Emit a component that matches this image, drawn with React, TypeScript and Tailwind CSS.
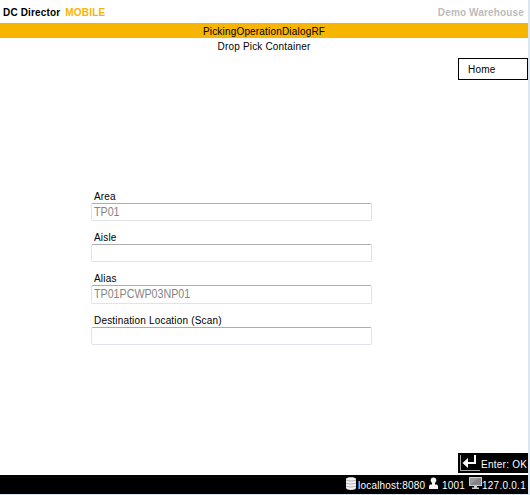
type FieldProps = { label: string; value?: string; box: string };

function Field({ label, value, box }: FieldProps) {
  return (
    <label className="block">
      <span className="block h-[13px] pl-[3px] leading-[14px] whitespace-nowrap">{label}</span>
      <span className={`block w-[281px] rounded-[2px] border border-[#e2e3ea] border-t-[#abadb3] pl-[2px] text-[12.5px] leading-[17px] tracking-normal text-[#858585] ${box}`}>
        <span className="inline-block origin-left scale-x-[0.855] whitespace-nowrap">{value}</span>
      </span>
    </label>
  );
}

function ReturnKey() {
  return (
    <svg width="20" height="16" viewBox="0 0 20 16" fill="none" shapeRendering="crispEdges">
      <path d="M.5 0V15.5H19.5" stroke="#a8a8a8" />
      <path d="M15 0V8H7" stroke="#fff" strokeWidth="2" />
      <path d="M8 3V13L2.5 8Z" fill="#fff" shapeRendering="auto" />
    </svg>
  );
}

function Database() {
  return (
    <svg width="10" height="13" viewBox="0 0 10 13">
      <path d="M0 2C0-.2 10-.2 10 2V11C10 13.5 0 13.5 0 11Z" fill="#f2f2f2" />
      <path d="M0 3.2Q5 5 10 3.2M0 6.2Q5 8 10 6.2M0 9.2Q5 11 10 9.2" stroke="#999" strokeWidth=".7" fill="none" />
    </svg>
  );
}

function Person() {
  return (
    <svg width="9" height="12" viewBox="0 0 9 12" fill="#f4f4f4">
      <circle cx="4.5" cy="3.2" r="2.8" />
      <path d="M3 5H6V7.5H8L9 9V12H0V9L1 7.5H3Z" />
    </svg>
  );
}

function Monitor() {
  return (
    <svg width="13" height="12" viewBox="0 0 13 12">
      <rect x=".5" y=".5" width="12" height="8" fill="#858585" stroke="#ccc" />
      <path d="M1 8L9 1H1Z" fill="#999" />
      <path d="M5 9H8V10.5H10V12H3V10.5H5Z" fill="#ccc" />
    </svg>
  );
}

export default function App() {
  return (
    <div className="h-[495px] w-[530px] overflow-hidden bg-[#dae6f2] font-['Liberation_Sans',Arial,sans-serif] text-[10px] tracking-[0.18px] text-black">
      <div className="flex h-[494px] w-[528px] flex-col bg-white">
        <header className="flex h-[23px] shrink-0 items-center justify-between pt-[3px] pr-[4px] pl-[3px] leading-[14px] font-bold whitespace-nowrap">
          <div className="flex gap-[5px]">
            <span className="tracking-[0.16px]">DC Director</span>
            <span className="text-[#f7b500]">MOBILE</span>
          </div>
          <span className="tracking-[0.15px] text-[#bcbcbc]">Demo Warehouse</span>
        </header>
        <div className="h-[15px] shrink-0 bg-[#f7b500] pt-px text-center leading-[16px]">PickingOperationDialogRF</div>
        <h1 className="h-[20px] shrink-0 pt-px text-center leading-[16px]">Drop Pick Container</h1>
        <button className="h-[22px] w-[70px] shrink-0 self-end border border-black pt-px pl-[9px] text-left leading-[20px]">Home</button>
        <main className="flex grow flex-col gap-[10px] pt-[110px] pl-[91px]">
          <Field label="Area" value="TP01" box="h-[18px]" />
          <Field label="Aisle" box="h-[18px]" />
          <Field label="Alias" value="TP01PCWP03NP01" box="h-[19px]" />
          <Field label="Destination Location (Scan)" box="h-[18px]" />
        </main>
        <button className="mb-[2px] flex h-[20px] w-[70px] shrink-0 self-end bg-black pt-[2px] pl-[2px] whitespace-nowrap text-white">
          <ReturnKey />
          <span className="pt-[3px] pl-px leading-[14px] tracking-[0.25px]">Enter: OK</span>
        </button>
        <footer className="flex h-[19px] shrink-0 justify-end bg-black pt-[2px] pr-[3px] leading-[17px] whitespace-nowrap text-white">
          <Database />
          <span className="ml-[2px] w-[69px] tracking-[0.2px]">localhost:8080</span>
          <span className="ml-[2px]"><Person /></span>
          <span className="ml-[4px] w-[27px]">1001</span>
          <Monitor />
          <span className="w-[43px] tracking-[0.25px]">127.0.0.1</span>
        </footer>
      </div>
    </div>
  );
}
